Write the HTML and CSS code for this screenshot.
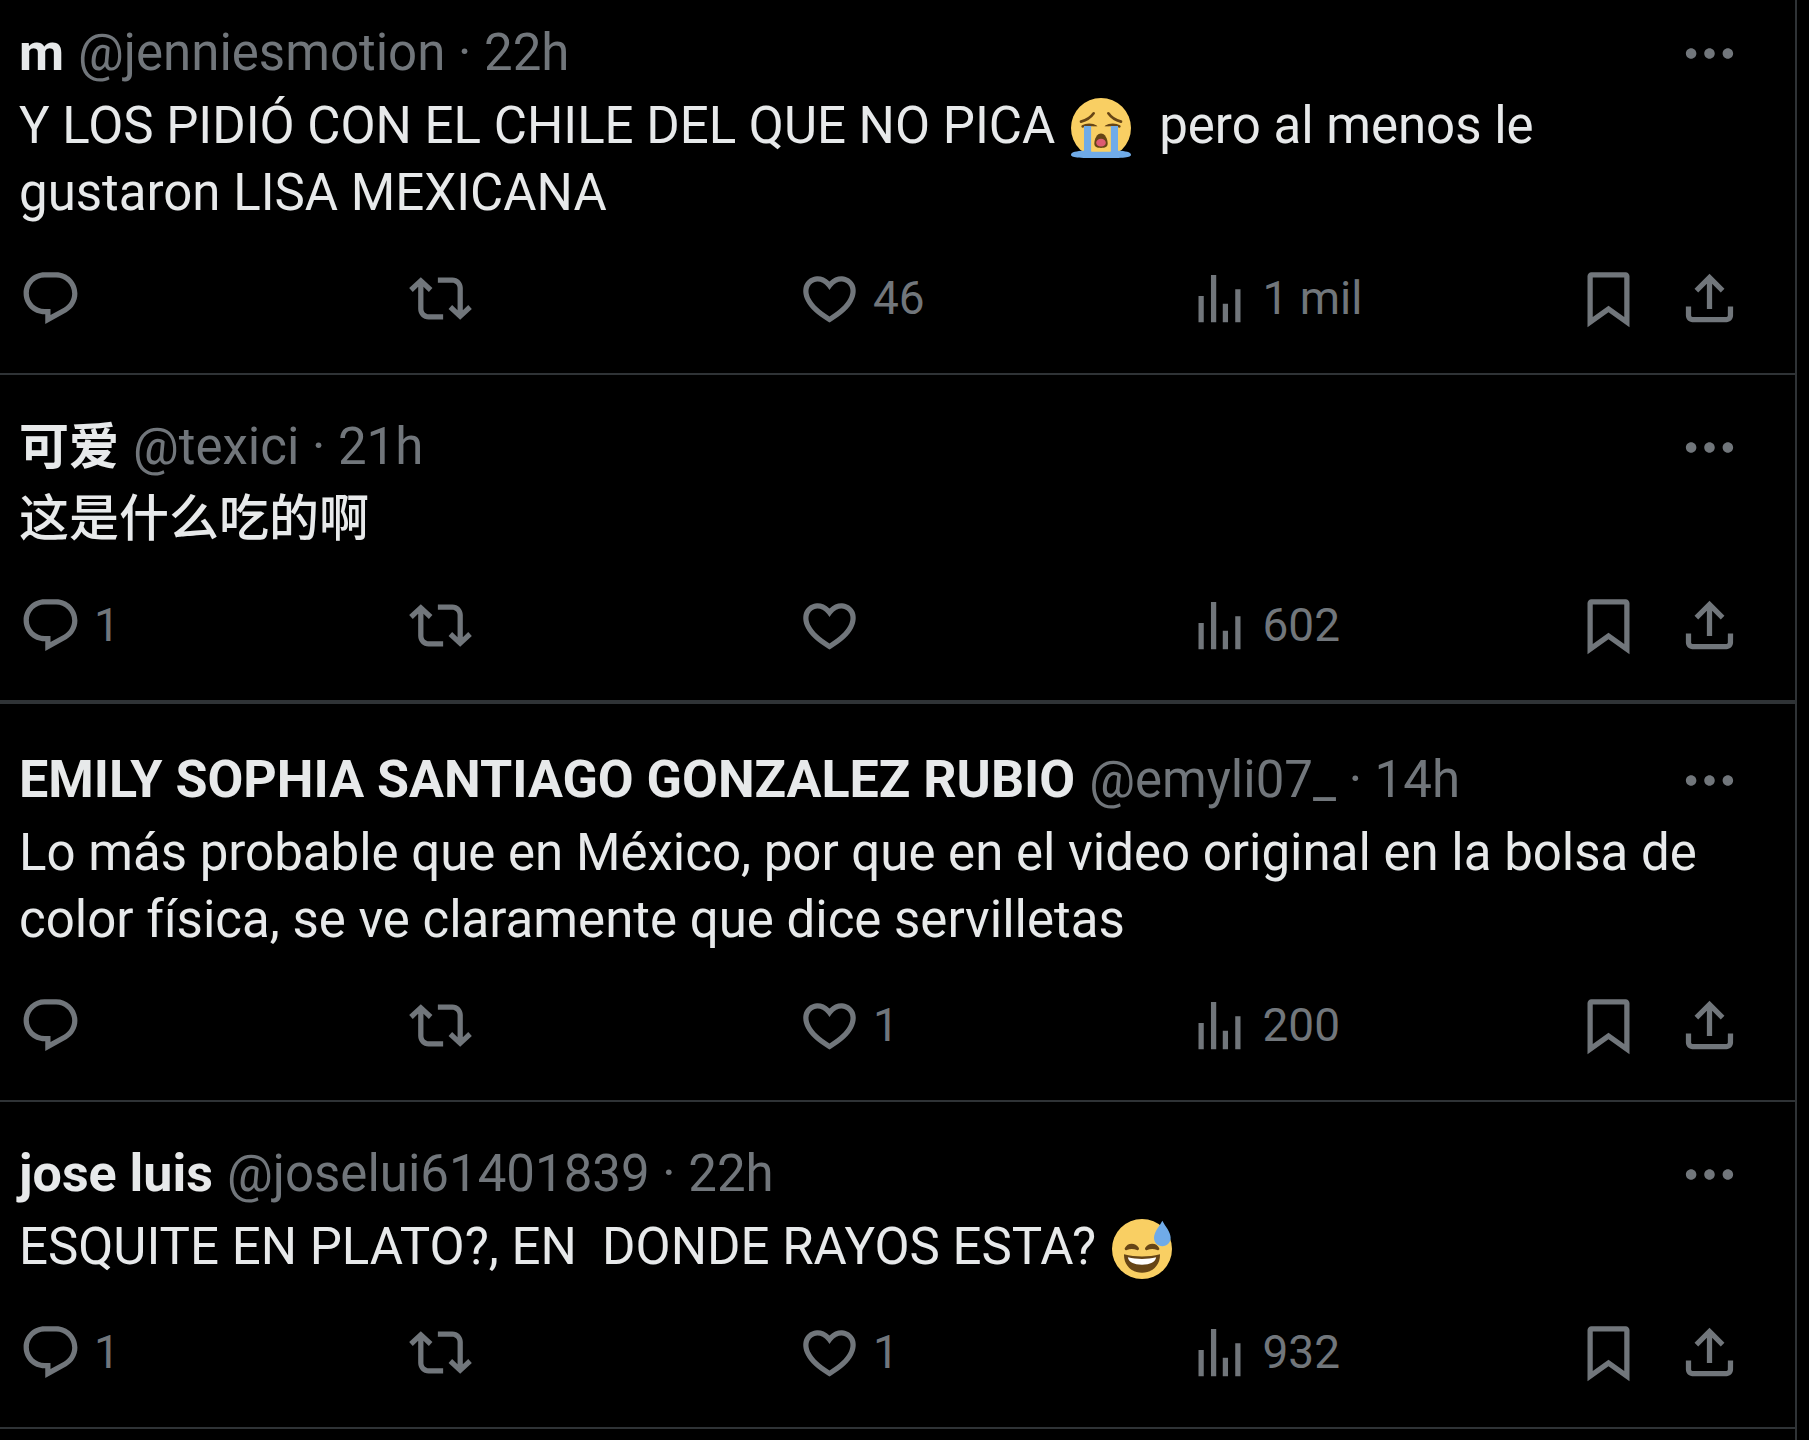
FILE: index.html
```html
<!DOCTYPE html>
<html lang="es">
<head>
<meta charset="utf-8">
<meta name="viewport" content="width=device-width, initial-scale=1">
<title>Respuestas</title>
<link rel="stylesheet" href="styles.css">
</head>
<body>
<svg class="sprite" aria-hidden="true">
  <symbol id="reply" viewBox="0 0 24 24"><path d="M1.751 10c0-4.42 3.584-8 8.005-8h4.366c4.49 0 8.129 3.64 8.129 8.13 0 2.96-1.607 5.68-4.196 7.11l-8.054 4.46v-3.69h-.067c-4.49.1-8.183-3.51-8.183-8.01zm8.005-6c-3.317 0-6.005 2.69-6.005 6 0 3.37 2.77 6.08 6.138 6.01l.351-.01h1.761v2.3l5.087-2.81c1.951-1.08 3.163-3.13 3.163-5.36 0-3.39-2.744-6.13-6.129-6.13H9.756z"/></symbol>
  <symbol id="repost" viewBox="0 0 24 24"><path d="M4.5 3.88l4.432 4.14-1.364 1.46L5.5 7.55V16c0 1.1.896 2 2 2H13v2H7.5c-2.209 0-4-1.79-4-4V7.55L1.432 9.48.068 8.02 4.5 3.88zM16.5 6H11V4h5.5c2.209 0 4 1.79 4 4v8.45l2.068-1.93 1.364 1.46-4.432 4.14-4.432-4.14 1.364-1.46 2.068 1.93V8c0-1.1-.896-2-2-2z"/></symbol>
  <symbol id="like" viewBox="0 0 24 24"><path d="M16.697 5.5c-1.222-.06-2.679.51-3.89 2.16l-.805 1.09-.806-1.09C9.984 6.01 8.526 5.44 7.304 5.5c-1.243.07-2.349.78-2.91 1.91-.552 1.12-.633 2.78.479 4.82 1.074 1.97 3.257 4.27 7.129 6.61 3.87-2.34 6.052-4.64 7.126-6.61 1.111-2.04 1.03-3.7.477-4.82-.561-1.13-1.666-1.84-2.908-1.91zm4.187 7.69c-1.351 2.48-4.001 5.12-8.379 7.67l-.503.3-.504-.3c-4.379-2.55-7.029-5.19-8.382-7.67-1.36-2.5-1.41-4.86-.514-6.67.887-1.79 2.647-2.91 4.601-3.01 1.651-.09 3.368.56 4.798 2.01 1.429-1.45 3.146-2.1 4.796-2.01 1.954.1 3.714 1.22 4.601 3.01.896 1.81.846 4.17-.514 6.67z"/></symbol>
  <symbol id="views" viewBox="0 0 24 24"><path d="M8.75 21V3h2v18h-2zM18 21V8.5h2V21h-2zM4 21l.004-10h2L6 21H4zm9.248 0v-7h2v7h-2z"/></symbol>
  <symbol id="save" viewBox="0 0 24 24"><path d="M4 3.5C4 2.67 4.67 2 5.5 2h13c.83 0 1.5.67 1.5 1.5v19.44l-8-5.71-8 5.71V3.5zM6 4v15.06l6-4.29 6 4.29V4H6z"/></symbol>
  <symbol id="share" viewBox="0 0 24 24"><path d="M12 2.59l5.7 5.7-1.41 1.42L13 6.41V16h-2V6.41l-3.3 3.3-1.41-1.42L12 2.59zM21 15l-.02 3.51c0 1.38-1.12 2.49-2.5 2.49H5.5C4.11 21 3 19.88 3 18.5V15h2v3.5c0 .28.22.5.5.5h12.98c.28 0 .5-.22.5-.5L19 15h2z"/></symbol>
  <symbol id="more" viewBox="0 0 24 24"><path d="M3 12c0-1.1.9-2 2-2s2 .9 2 2-.9 2-2 2-2-.9-2-2zm9 2c1.1 0 2-.9 2-2s-.9-2-2-2-2 .9-2 2 .9 2 2 2zm7 0c1.1 0 2-.9 2-2s-.9-2-2-2-2 .9-2 2 .9 2 2 2z"/></symbol>
</svg>

<main class="timeline">
  <article class="post post--first">
    <header class="post__head">
      <a class="post__name" href="#">m</a>
      <span class="post__meta"><a href="#">@jenniesmotion</a> · <a href="#">22h</a></span>
      <button class="action post__more" type="button" aria-label="Más opciones"><svg class="icon"><use href="#more"/></svg></button>
    </header>
    <p class="post__text">Y LOS PIDIÓ CON EL CHILE DEL QUE NO PICA <svg class="emoji" viewBox="0 0 36 36" role="img" aria-label="Cara llorando"><circle cx="18" cy="18" r="18" fill="#f9cf63"/><g fill="none" stroke="#664516" stroke-width="1.6" stroke-linecap="round"><path d="M6 14.2c3.2-.8 5.800-2.400 7.600-5"/><path d="M30 14.2c-3.200-.8-5.800-2.400-7.600-5"/><path d="M7 17c2.200-1.200 5.800-1.200 8 .2M29 17c-2.200-1.200-5.800-1.200-8 .2"/></g><path d="M0 34c0-1.600 3.500-2.300 7.800-2.400V16.800h4.400V32h11.600V16.800h4.400v14.800c4.300.1 7.800.8 7.800 2.400 0 1.700-4 2-18 2S0 35.700 0 34z" fill="#70abe8"/><path d="M12.200 17v15.200h11.600V17z" fill="#f9cf63"/><path d="M18 21.300c2.300 0 4 3 4 6.200 0 1.800-1.700 2.500-4 2.500s-4-.7-4-2.500c0-3.200 1.700-6.200 4-6.200z" fill="#664516"/><ellipse cx="18" cy="26.800" rx="2.900" ry="2.300" fill="#dd5c72"/></svg>&nbsp; pero al menos le gustaron LISA MEXICANA</p>
    <footer class="post__actions">
      <button class="action" type="button" aria-label="Responder"><svg class="icon"><use href="#reply"/></svg></button>
      <button class="action" type="button" aria-label="Repostear"><svg class="icon"><use href="#repost"/></svg></button>
      <button class="action" type="button" aria-label="46 Me gusta"><svg class="icon"><use href="#like"/></svg>46</button>
      <a class="action" href="#" aria-label="1 mil visualizaciones"><svg class="icon"><use href="#views"/></svg>1 mil</a>
      <button class="action" type="button" aria-label="Guardar"><svg class="icon"><use href="#save"/></svg></button>
      <button class="action" type="button" aria-label="Compartir"><svg class="icon"><use href="#share"/></svg></button>
    </footer>
  </article>

  <article class="post post--thread-end">
    <header class="post__head">
      <a class="post__name" href="#" lang="zh">可爱</a>
      <span class="post__meta"><a href="#">@texici</a> · <a href="#">21h</a></span>
      <button class="action post__more" type="button" aria-label="Más opciones"><svg class="icon"><use href="#more"/></svg></button>
    </header>
    <p class="post__text" lang="zh">这是什么吃的啊</p>
    <footer class="post__actions">
      <button class="action" type="button" aria-label="1 respuesta"><svg class="icon"><use href="#reply"/></svg>1</button>
      <button class="action" type="button" aria-label="Repostear"><svg class="icon"><use href="#repost"/></svg></button>
      <button class="action" type="button" aria-label="Me gusta"><svg class="icon"><use href="#like"/></svg></button>
      <a class="action" href="#" aria-label="602 visualizaciones"><svg class="icon"><use href="#views"/></svg>602</a>
      <button class="action" type="button" aria-label="Guardar"><svg class="icon"><use href="#save"/></svg></button>
      <button class="action" type="button" aria-label="Compartir"><svg class="icon"><use href="#share"/></svg></button>
    </footer>
  </article>

  <article class="post">
    <header class="post__head">
      <a class="post__name" href="#">EMILY SOPHIA SANTIAGO GONZALEZ RUBIO</a>
      <span class="post__meta"><a href="#">@emyli07_</a> · <a href="#">14h</a></span>
      <button class="action post__more" type="button" aria-label="Más opciones"><svg class="icon"><use href="#more"/></svg></button>
    </header>
    <p class="post__text">Lo más probable que en México, por que en el video original en la bolsa de color física, se ve claramente que dice servilletas</p>
    <footer class="post__actions">
      <button class="action" type="button" aria-label="Responder"><svg class="icon"><use href="#reply"/></svg></button>
      <button class="action" type="button" aria-label="Repostear"><svg class="icon"><use href="#repost"/></svg></button>
      <button class="action" type="button" aria-label="1 Me gusta"><svg class="icon"><use href="#like"/></svg>1</button>
      <a class="action" href="#" aria-label="200 visualizaciones"><svg class="icon"><use href="#views"/></svg>200</a>
      <button class="action" type="button" aria-label="Guardar"><svg class="icon"><use href="#save"/></svg></button>
      <button class="action" type="button" aria-label="Compartir"><svg class="icon"><use href="#share"/></svg></button>
    </footer>
  </article>

  <article class="post">
    <header class="post__head">
      <a class="post__name" href="#">jose luis</a>
      <span class="post__meta"><a href="#">@joselui61401839</a> · <a href="#">22h</a></span>
      <button class="action post__more" type="button" aria-label="Más opciones"><svg class="icon"><use href="#more"/></svg></button>
    </header>
    <p class="post__text">ESQUITE EN PLATO?, EN &nbsp;DONDE RAYOS ESTA? <svg class="emoji" viewBox="0 0 36 36" role="img" aria-label="Cara sonriente con sudor"><circle cx="18" cy="18" r="18" fill="#f9cf63"/><path d="M7.200 21.200c3.500 1 7 1.300 10.800 1.300s7.300-.3 10.800-1.300c.2 6.300-4.300 11-10.800 11S7 27.500 7.200 21.200z" fill="#664516"/><path d="M9.500 23c5.500 1.300 11.500 1.300 17 0-.5 3-3.500 4.400-8.500 4.400S10 26 9.500 23z" fill="#fff"/><g fill="none" stroke="#664516" stroke-width="1.800" stroke-linecap="round" stroke-linejoin="round"><path d="M8.500 17.800c1.500-2.800 5-2.800 6.800 0-2-.9-4.800-.9-6.800 0zM20.700 17.800c1.800-2.800 5.300-2.800 6.800 0-2-.9-4.800-.9-6.800 0z"/></g><path d="M30.200 1c1.700 3.300 5 6.600 5 10.300 0 2.900-2.200 5-5 5s-5-2.100-5-5C25.200 7.600 28.500 4.300 30.200 1z" fill="#70abe8"/></svg></p>
    <footer class="post__actions">
      <button class="action" type="button" aria-label="1 respuesta"><svg class="icon"><use href="#reply"/></svg>1</button>
      <button class="action" type="button" aria-label="Repostear"><svg class="icon"><use href="#repost"/></svg></button>
      <button class="action" type="button" aria-label="1 Me gusta"><svg class="icon"><use href="#like"/></svg>1</button>
      <a class="action" href="#" aria-label="932 visualizaciones"><svg class="icon"><use href="#views"/></svg>932</a>
      <button class="action" type="button" aria-label="Guardar"><svg class="icon"><use href="#save"/></svg></button>
      <button class="action" type="button" aria-label="Compartir"><svg class="icon"><use href="#share"/></svg></button>
    </footer>
  </article>
</main>
</body>
</html>
```
FILE: styles.css
```css
:root {
  --text: #e7e9ea;
  --muted: #71767b;
  --line: #2f3336;
}

* {
  box-sizing: border-box;
}

body {
  margin: 0;
  background: #000;
  color: var(--text);
  font-family: Roboto, "Noto Sans CJK SC", sans-serif;
  font-size: 51px;
  line-height: 67px;
}

a {
  color: inherit;
  text-decoration: none;
}

.sprite {
  display: none;
}

.timeline {
  min-height: 100vh;
  margin-right: 12px;
  border-right: 2px solid var(--line);
}

.post {
  padding: 39px 54px 43px 19px;
  border-bottom: 2px solid var(--line);
}

.post--first {
  padding-top: 20px;
}

.post--thread-end {
  border-bottom-width: 4px;
}

.post--thread-end + .post {
  padding-top: 43px;
}

.post__head {
  display: flex;
  align-items: baseline;
  gap: 14px;
  height: 67px;
  line-height: 66px;
}

.post__name {
  font-size: 52px;
  font-weight: 700;
  white-space: nowrap;
}

.post__name:lang(zh) {
  font-size: 50px;
}

.post__meta {
  color: var(--muted);
  white-space: nowrap;
}

.post__more {
  align-self: center;
  margin-left: auto;
}

.post__text {
  margin: 5px 0 41px;
  padding-right: 20px;
}

.post__text:lang(zh) {
  font-size: 50px;
  font-weight: 500;
}

.emoji {
  width: 60px;
  height: 60px;
  margin: 0 3px;
  vertical-align: -15px;
}

.post__actions {
  display: grid;
  grid-template-columns: repeat(4, 1fr) auto auto;
}

.action {
  display: flex;
  align-items: center;
  gap: 12px;
  height: 63px;
  padding: 0;
  border: 0;
  background: none;
  color: var(--muted);
  font: inherit;
  font-size: 46px;
  cursor: pointer;
}

.action:last-child {
  margin-left: 38px;
}

.post__more:last-child {
  margin-left: auto;
}

.icon {
  flex: none;
  width: 63px;
  height: 63px;
  fill: currentColor;
}
```
